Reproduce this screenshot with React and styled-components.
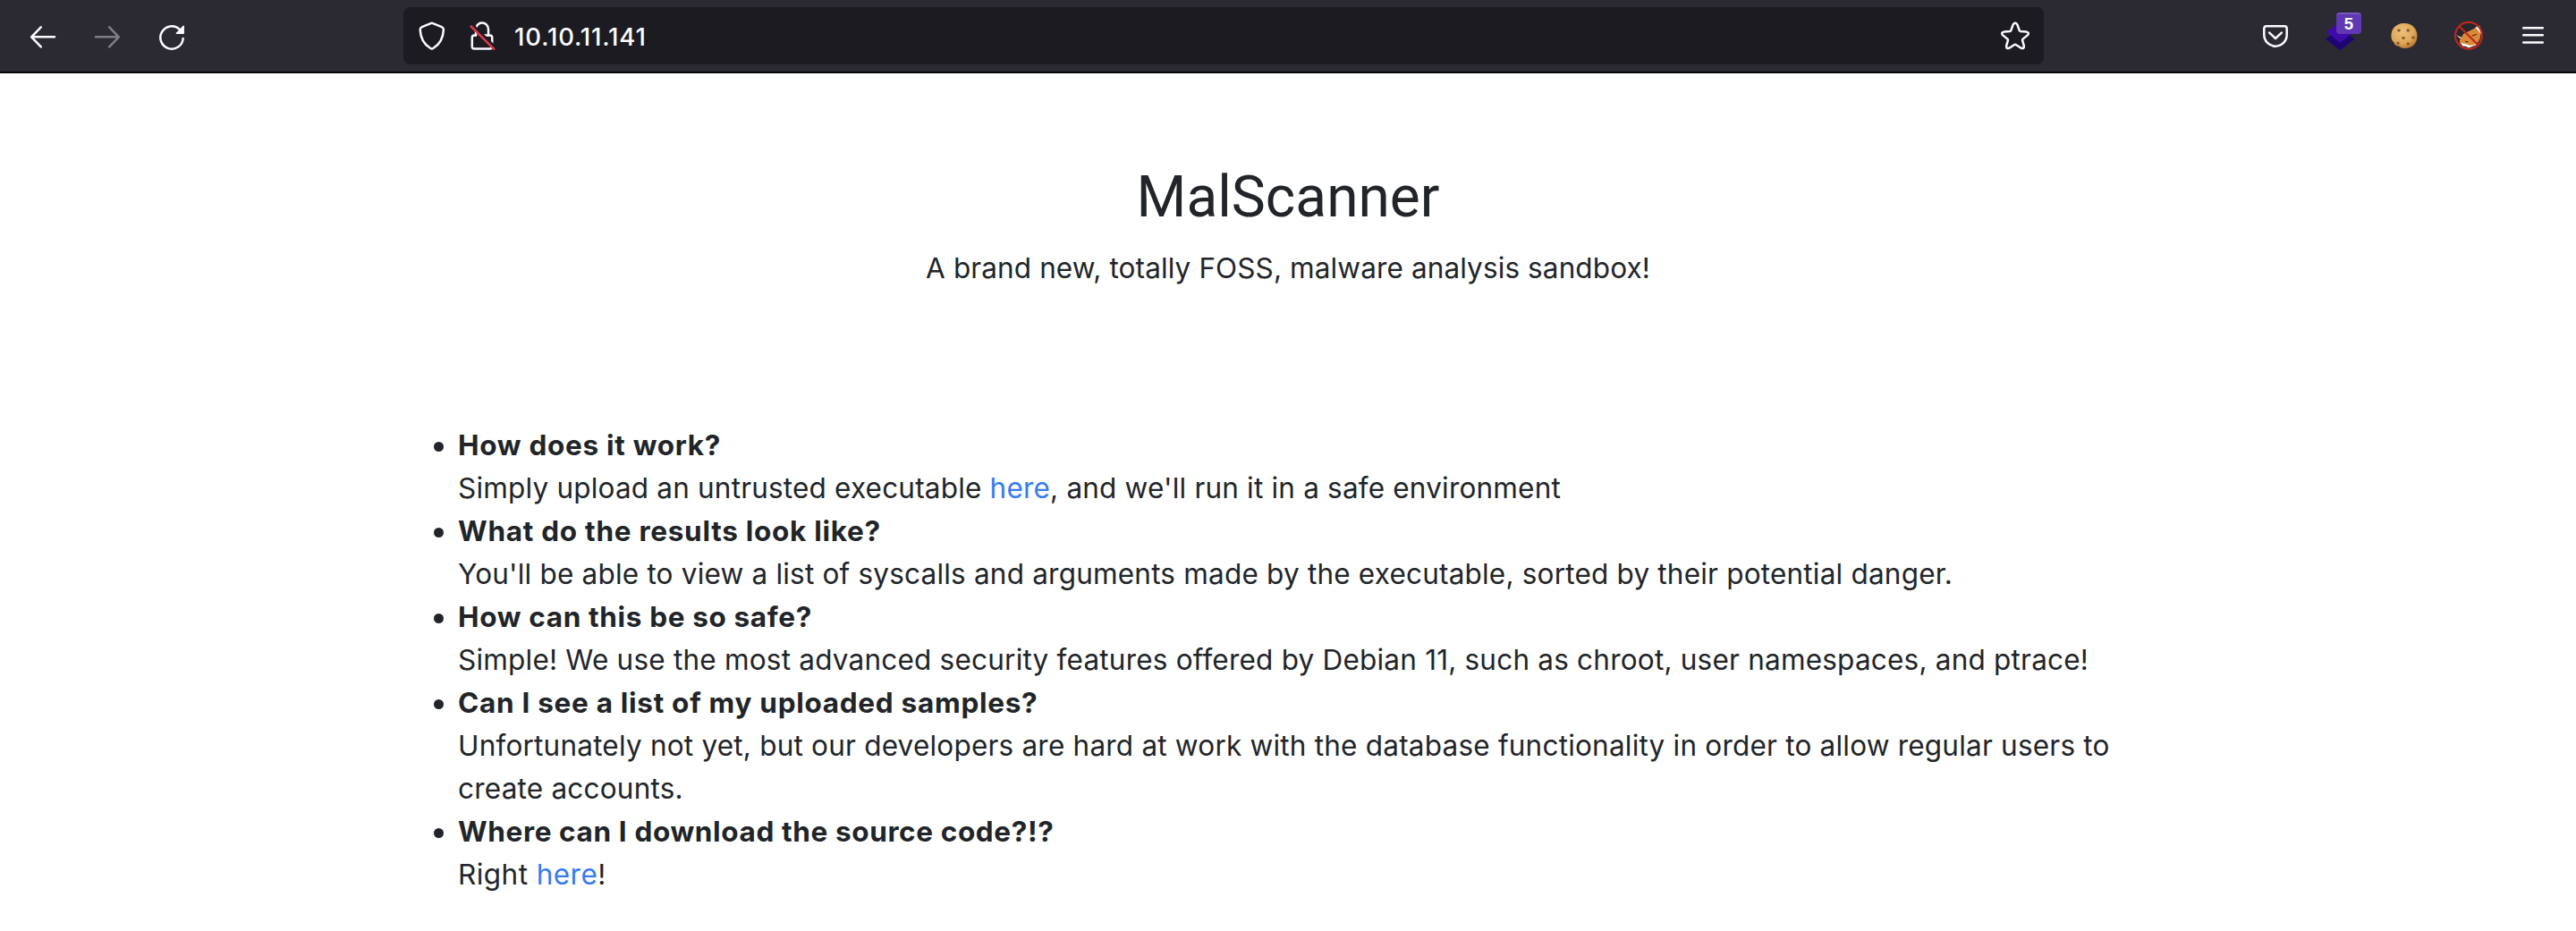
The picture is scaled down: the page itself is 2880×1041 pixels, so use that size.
import React from 'react';
import styled, { createGlobalStyle } from 'styled-components';

const GlobalStyle = createGlobalStyle`
  * { box-sizing: border-box; }
  body {
    margin: 0;
    background: #fff;
    color: #212529;
    font-family: Inter, "Liberation Sans", sans-serif;
  }
`;

const Window = styled.div`
  display: flex;
  flex-direction: column;
  width: 2880px;
  height: 1041px;
  overflow: hidden;
`;

const Toolbar = styled.header`
  display: flex;
  align-items: center;
  justify-content: space-between;
  height: 82px;
  padding: 0 12px;
  background: #2b2a33;
  border-bottom: 2px solid #060509;
`;

const ButtonGroup = styled.nav`
  display: flex;
  width: ${({ $width }) => $width}px;
  justify-content: ${({ $end }) => ($end ? 'flex-end' : 'flex-start')};
`;

const ToolButton = styled.button`
  position: relative;
  display: flex;
  width: 72px;
  height: 80px;
  padding: 0;
  border: 0;
  background: none;
  color: #fbfbfe;
  opacity: ${({ $disabled }) => ($disabled ? 0.4 : 1)};
`;

const ToolGlyph = styled.svg.attrs({ viewBox: '0 0 72 80' })`
  width: 72px;
  height: 80px;
  fill: none;
  stroke: currentColor;
  stroke-width: 2.5;
  stroke-linecap: round;
  stroke-linejoin: round;
`;

const Badge = styled.span`
  position: absolute;
  top: 14px;
  left: 32px;
  width: 28px;
  height: 24px;
  border-top: 2px solid #7a56c0;
  border-radius: 4px;
  background: #6038b3;
  color: #fff;
  font-size: 18.5px;
  font-weight: 600;
  line-height: 22px;
  text-align: center;
`;

const AddressBar = styled.div`
  display: flex;
  align-items: center;
  flex: none;
  width: 1834px;
  height: 64px;
  padding: 0 16px;
  border-radius: 8px;
  background: #1c1b22;
  color: #fbfbfe;
`;

const FieldGlyph = styled.svg.attrs({ viewBox: '0 0 32 32' })`
  flex: none;
  width: 32px;
  height: 32px;
  margin-right: ${({ $gap = 0 }) => $gap}px;
  fill: none;
  stroke: currentColor;
  stroke-width: 2.5;
  stroke-linecap: round;
  stroke-linejoin: round;
`;

const Address = styled.span`
  flex: 1;
  padding-top: 1px;
  font-size: 27.5px;
  font-weight: 500;
  line-height: 40px;
  letter-spacing: 0.85px;
`;

const Page = styled.main`
  display: flex;
  flex-direction: column;
  padding-top: 100px;
`;

const Title = styled.h1`
  margin: 0 0 17px;
  font-family: Roboto, sans-serif;
  font-size: 64px;
  font-weight: 430;
  line-height: 77px;
  text-align: center;
`;

const Tagline = styled.p`
  margin: 0 0 150px;
  font-size: 31.5px;
  line-height: 48px;
  letter-spacing: 0.11px;
  text-align: center;
`;

const Questions = styled.ul`
  display: flex;
  flex-direction: column;
  margin: 0;
  padding: 0 0 0 484px;
  list-style: none;
  font-size: 31.5px;
  line-height: 48px;
  white-space: nowrap;
`;

const Item = styled.li`
  display: grid;
  grid-template-columns: 28px auto;
`;

const Bullet = styled.span`
  width: 11.5px;
  height: 11.5px;
  margin: 19.5px 0 0 0.5px;
  border-radius: 50%;
  background: #212529;
`;

const Question = styled.strong`
  display: block;
  font-weight: 700;
  letter-spacing: ${({ $tracking }) => $tracking}px;
`;

const Line = styled.span`
  display: block;
  letter-spacing: ${({ $tracking = 0.21 }) => $tracking}px;
`;

const Link = styled.a`
  color: #377bf0;
  text-decoration: none;
`;

const items = [
  {
    question: 'How does it work?',
    tracking: 0.7,
    lines: [
      <>
        Simply upload an untrusted executable <Link>here</Link>, and we'll run it in a safe environment
      </>,
    ],
    lineTracking: 0.19,
  },
  {
    question: 'What do the results look like?',
    tracking: 0.73,
    lines: ["You'll be able to view a list of syscalls and arguments made by the executable, sorted by their potential danger."],
    lineTracking: 0.2,
  },
  {
    question: 'How can this be so safe?',
    tracking: 0.65,
    lines: ['Simple! We use the most advanced security features offered by Debian 11, such as chroot, user namespaces, and ptrace!'],
  },
  {
    question: 'Can I see a list of my uploaded samples?',
    tracking: 0.71,
    lines: [
      'Unfortunately not yet, but our developers are hard at work with the database functionality in order to allow regular users to',
      'create accounts.',
    ],
  },
  {
    question: 'Where can I download the source code?!?',
    tracking: 0.63,
    lines: [
      <>
        Right <Link>here</Link>!
      </>,
    ],
    lineTracking: 0.45,
  },
];

const STAR =
  'M13.6 3.6Q16-.2 18.4 3.6L20.8 10.2Q21.2 11 22 11.1L28.5 11.6Q32.4 12.4 29.8 15.4L24.6 19.6Q23.9 20.3 24.1 21.2L25.8 27.2Q26.2 31 22.6 29.8L16.8 26Q16 25.5 15.2 26L9.4 29.8Q5.8 31 6.2 27.2L7.9 21.2Q8.1 20.3 7.4 19.6L2.2 15.4Q-.4 12.4 3.5 11.6L10 11.1Q10.8 11 11.2 10.2Z';

const chips = [
  [30, 34],
  [40.3, 34],
  [35, 42.5],
  [29, 48.3],
  [40.3, 49],
  [46, 42],
];

export default function App() {
  return (
    <Window>
      <GlobalStyle />
      <Toolbar>
        <ButtonGroup $width={439}>
          <ToolButton aria-label="Back">
            <ToolGlyph>
              <path d="M49 41.3H23.5M33.8 30.3L23.2 41.3L33.8 52.3" />
            </ToolGlyph>
          </ToolButton>
          <ToolButton aria-label="Forward" $disabled>
            <ToolGlyph>
              <path d="M23 41.3H48.5M38.2 30.3L48.8 41.3L38.2 52.3" />
            </ToolGlyph>
          </ToolButton>
          <ToolButton aria-label="Reload">
            <ToolGlyph>
              <path d="M48.7 43A12.7 12.7 0 1 1 44.8 32.8" />
              <path d="M49.2 29.4V37.2H41.4Z" fill="currentColor" strokeWidth="1.5" />
            </ToolGlyph>
          </ToolButton>
        </ButtonGroup>

        <AddressBar>
          <FieldGlyph $gap={26}>
            <path d="M14.6 2.1Q15.8 1.5 17 2.1L26.8 6.2Q29 7.2 28.9 9.4C28.5 18.5 24.2 25.9 17.3 30Q15.8 30.9 14.3 30C7.4 25.9 3.1 18.5 2.7 9.4Q2.6 7.2 4.8 6.2Z" />
          </FieldGlyph>
          <FieldGlyph $gap={18}>
            <path d="M7 15.5V8.7A7 7.2 0 0 1 21 8.7V15.5" />
            <path d="M7 15.500H5.300Q2.800 15.500 2.800 18V28Q2.800 30.500 5.300 30.500H22.700Q25.200 30.500 25.200 28V18Q25.200 15.500 22.700 15.500H15" />
            <path d="M3.4 4.200L28.6 29" stroke="#1c1b22" strokeWidth="3.500" />
            <path d="M1.7 5.5L27.3 30.8" stroke="#dc3a4c" />
          </FieldGlyph>
          <Address>10.10.11.141</Address>
          <FieldGlyph>
            <path d={STAR} />
          </FieldGlyph>
        </AddressBar>

        <ButtonGroup $width={583} $end>
          <ToolButton aria-label="Pocket">
            <ToolGlyph>
              <path d="M26 29.3H46Q48.7 29.3 48.7 32V39A12.7 12.7 0 0 1 23.3 39V32Q23.3 29.3 26 29.3Z" />
              <path d="M29.2 36.6L36 43L42.8 36.6" />
            </ToolGlyph>
          </ToolButton>
          <ToolButton aria-label="Layers">
            <ToolGlyph>
              <path d="M20 43.7L36.2 31L52.5 43.7L36.2 56.2Z" fill="#1c0472" stroke="none" />
              <path d="M21 35.8L36.2 24L51.5 35.8L36.2 48Z" fill="#3e0aa9" stroke="none" />
            </ToolGlyph>
            <Badge>5</Badge>
          </ToolButton>
          <ToolButton aria-label="Cookies">
            <ToolGlyph>
              <defs>
                <radialGradient id="dough" cx="0.42" cy="0.35" r="0.7">
                  <stop offset="0" stopColor="#ecc07c" />
                  <stop offset="0.65" stopColor="#dda658" />
                  <stop offset="1" stopColor="#b56f28" />
                </radialGradient>
              </defs>
              <path
                d="M35 26C44 25.5 50.5 31.5 50.5 40C50.5 49 44.5 54 37 54C33.5 54.5 31.5 53 30 51.5C27.5 52 25 50 24.5 47.5C22 45.5 21.4 43 21.4 40C21.5 32 27 26.2 35 26Z"
                fill="url(#dough)"
                stroke="none"
              />
              {chips.map(([x, y]) => (
                <rect key={`${x}-${y}`} x={x - 1.6} y={y - 1.5} width="3.2" height="3" rx="1" fill="#8a5828" stroke="none" />
              ))}
            </ToolGlyph>
          </ToolButton>
          <ToolButton aria-label="Fox blocker">
            <ToolGlyph>
              <circle cx="36" cy="40" r="14.7" fill="#27262c" stroke="none" />
              <g stroke="none">
                <path d="M22 39L28 42L27 49L36 53.5L45 50L41 46L30 46Z" fill="#fff" />
                <path d="M43 31L48 28.5L50.5 36L48 41Z" fill="#fff" />
                <path d="M26 45L30 38L37 34.500L44 31L49 37C50 43 47 48.5 41 50.5L33 51L26 48.5Z" fill="#dc8936" />
                <path d="M27.5 48L34 49.5L39 52L29 51.5Z" fill="#fff" />
                <path d="M31.5 45.8L36 46.3L34 47.8Z" fill="#2a2020" />
                <path d="M40 40L44.5 38.5" stroke="#4a2d18" strokeWidth="1.2" />
              </g>
              <circle cx="36" cy="39.8" r="14.9" stroke="#bd271f" strokeWidth="2.1" />
              <path d="M25.6 29.4L46.5 50.3" stroke="#bd271f" strokeWidth="2.1" />
            </ToolGlyph>
          </ToolButton>
          <ToolButton aria-label="Menu">
            <ToolGlyph>
              <path d="M25.2 31.3H46.8M25.2 39.3H46.8M25.2 47.4H46.8" />
            </ToolGlyph>
          </ToolButton>
        </ButtonGroup>
      </Toolbar>

      <Page>
        <Title>MalScanner</Title>
        <Tagline>A brand new, totally FOSS, malware analysis sandbox!</Tagline>
        <Questions>
          {items.map(({ question, tracking, lines, lineTracking }) => (
            <Item key={question}>
              <Bullet />
              <div>
                <Question $tracking={tracking}>{question}</Question>
                {lines.map((line, i) => (
                  <Line key={i} $tracking={lineTracking}>
                    {line}
                  </Line>
                ))}
              </div>
            </Item>
          ))}
        </Questions>
      </Page>
    </Window>
  );
}
